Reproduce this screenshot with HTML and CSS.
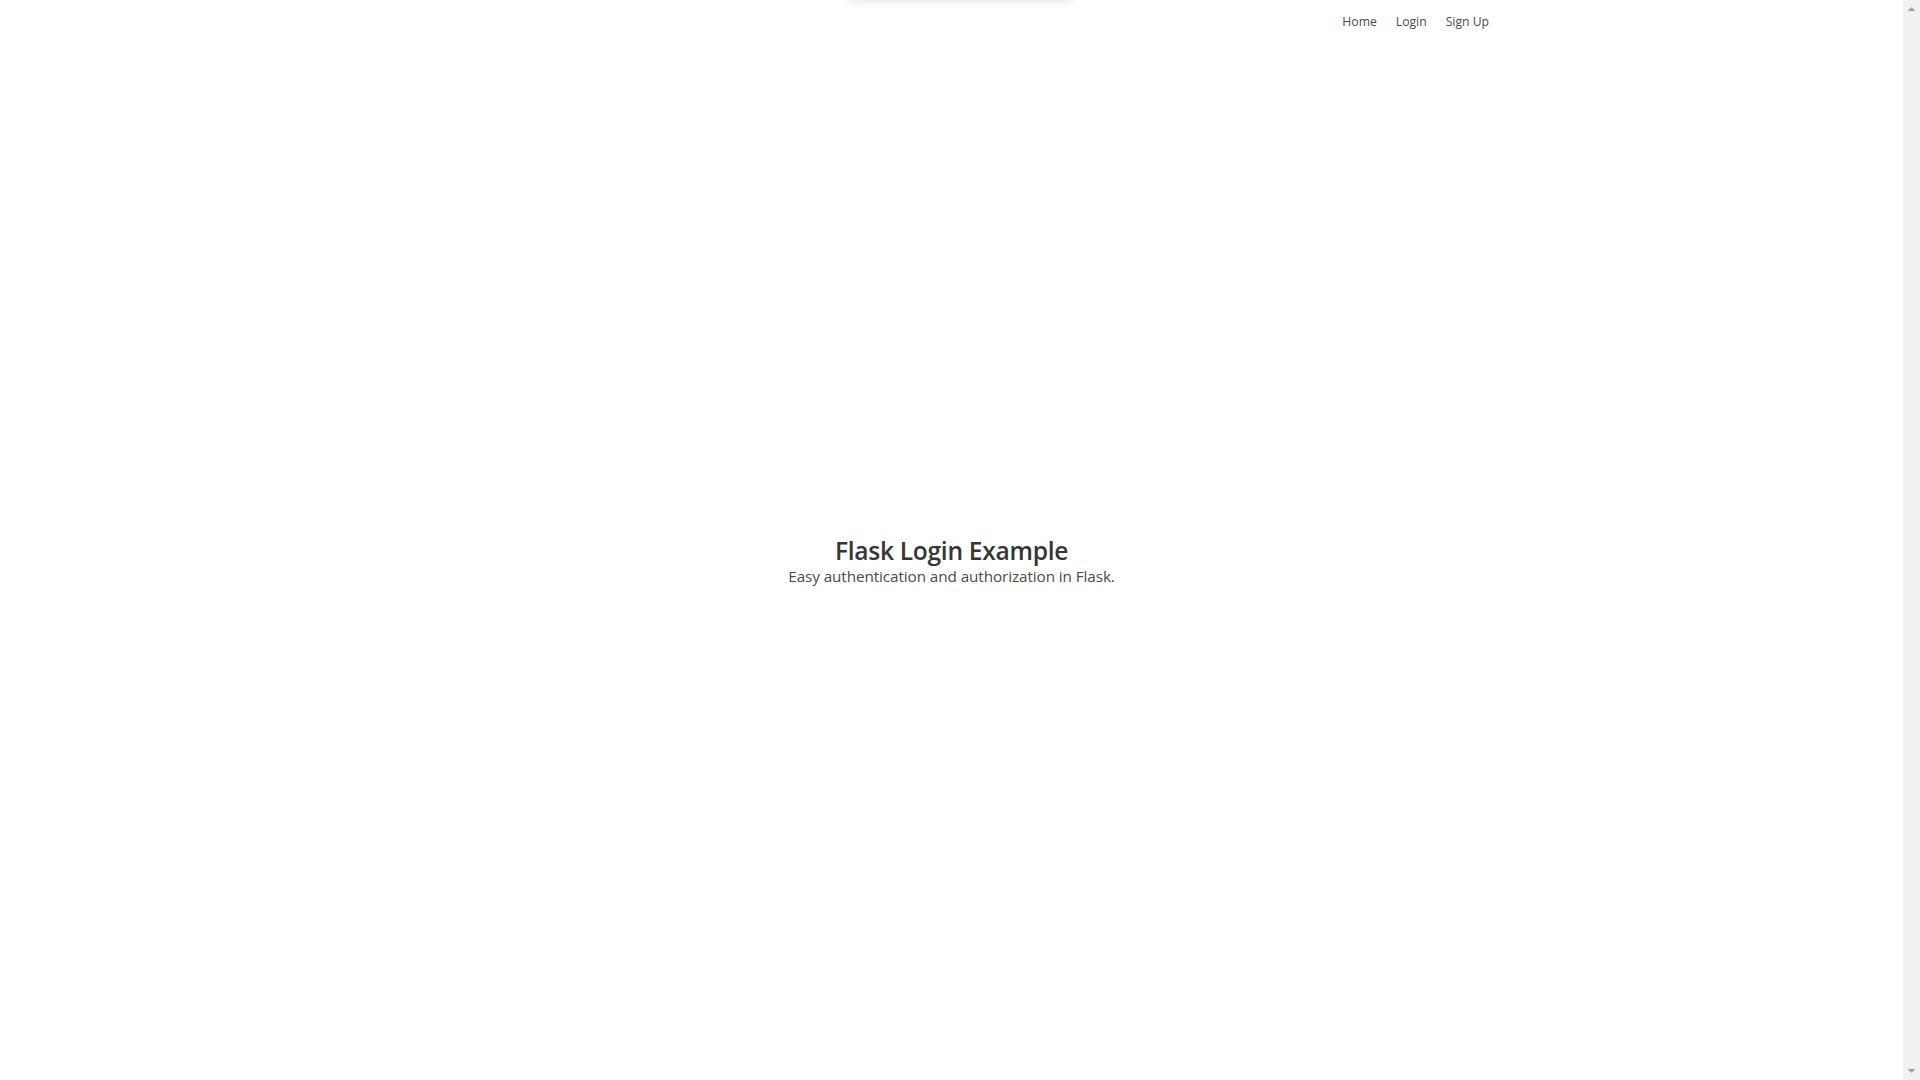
FILE: index.html
```html
<!DOCTYPE html>
<html lang="en">
<head>
<meta charset="utf-8">
<title>Flask Login Example</title>
<link rel="stylesheet" href="styles.css">
</head>
<body>
<div class="window">
  <section class="hero">
    <div class="top-shadow"></div>
    <div class="hero-head">
      <nav class="navbar">
        <div class="container nav-end">
          <a class="nav-item" href="#">Home</a>
          <a class="nav-item" href="#">Login</a>
          <a class="nav-item" href="#">Sign Up</a>
        </div>
      </nav>
    </div>
    <div class="hero-body">
      <h1 class="title">Flask Login Example</h1>
      <h2 class="subtitle">Easy authentication and authorization in Flask.</h2>
    </div>
  </section>
  <div class="scrollbar">
    <svg class="arrow" width="17" height="17" viewBox="0 0 17 17"><path d="M4.5 11h8L8.5 7z" fill="#a3a3a3"/></svg>
    <div class="track"></div>
    <svg class="arrow" width="17" height="17" viewBox="0 0 17 17"><path d="M4.5 6h8L8.5 10z" fill="#a3a3a3"/></svg>
  </div>
</div>
</body>
</html>
```
FILE: styles.css
```css
html, body {
  margin: 0;
  padding: 0;
  height: 100%;
  overflow: hidden;
  background: #fff;
}
body {
  font-family: "Open Sans", "Noto Sans", sans-serif;
  color: #4a4a4a;
}
.window {
  display: flex;
  height: 1080px;
  width: 1920px;
}
.hero {
  position: relative;
  flex: 1;
  display: flex;
  flex-direction: column;
  min-width: 0;
}
.top-shadow {
  position: absolute;
  top: -40px;
  left: 848px;
  width: 226px;
  height: 40px;
  border-radius: 6px;
  box-shadow: 0 2px 10px rgba(0, 0, 0, 0.09);
}
.hero-head {
  height: 42px;
}
.navbar {
  height: 42px;
}
.container {
  width: 1075px;
  margin: 0 auto;
  height: 100%;
}
.nav-end {
  display: flex;
  justify-content: flex-end;
  align-items: center;
}
.nav-item {
  font-size: 12.2px;
  color: #4a4a4a;
  text-decoration: none;
  padding: 0 0 0 19px;
  line-height: 16px;
  margin-top: 1px;
}
.hero-body {
  flex: 1;
  display: flex;
  flex-direction: column;
  align-items: center;
  justify-content: center;
}
.title {
  margin: 0;
  font-size: 24.6px;
  font-weight: 600;
  color: #363636;
  line-height: 28px;
  letter-spacing: -0.3px;
}
.subtitle {
  margin: 1px 0 0;
  font-size: 15.3px;
  font-weight: 400;
  color: #4a4a4a;
  line-height: 20px;
  letter-spacing: -0.1px;
}
.scrollbar {
  width: 17px;
  flex: none;
  background: #f1f1f1;
  display: flex;
  flex-direction: column;
}
.track {
  flex: 1;
}
.arrow {
  display: block;
  flex: none;
}
```
